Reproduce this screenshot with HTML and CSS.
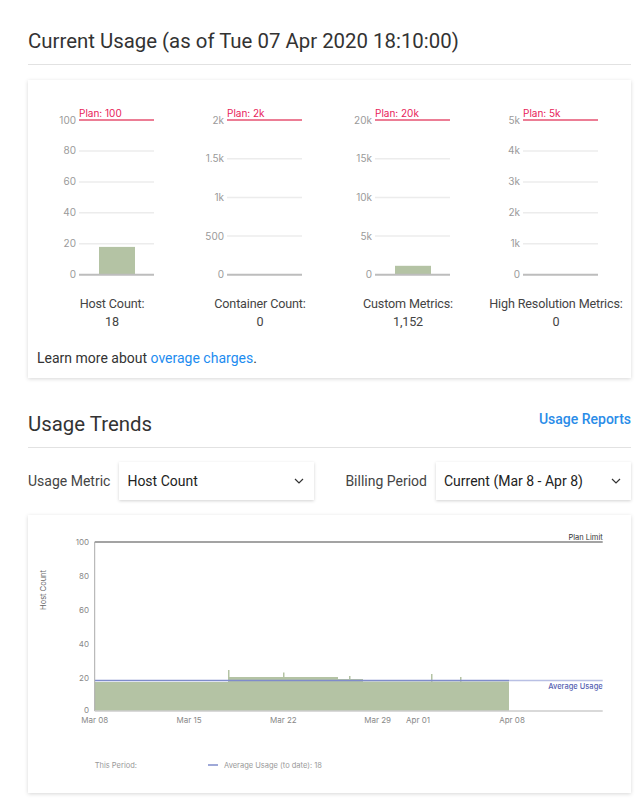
FILE: index.html
```html
<!DOCTYPE html>
<html lang="en">
<head>
<meta charset="utf-8">
<title>Usage</title>
<link rel="stylesheet" href="styles.css">
</head>
<body>
<main class="page">
  <h1 class="section-title">Current Usage (as of Tue 07 Apr 2020 18:10:00)</h1>

  <section class="card usage-card">
    <div class="usage-grid">
      <div class="usage-col">
        <svg class="mini" width="148" height="185" viewBox="0 0 148 185">
          <line class="grid" x1="41" x2="116" y1="50.9" y2="50.9"/>
          <line class="grid" x1="41" x2="116" y1="81.9" y2="81.9"/>
          <line class="grid" x1="41" x2="116" y1="112.8" y2="112.8"/>
          <line class="grid" x1="41" x2="116" y1="143.8" y2="143.8"/>
          <rect class="bar" x="61" y="146.9" width="36" height="27.8"/>
          <line class="zero" x1="41" x2="116" y1="174.7" y2="174.7"/>
          <line class="plan" x1="41" x2="116" y1="20" y2="20"/>
          <text class="plan-label" x="41" y="16.5">Plan: 100</text>
          <text class="tick" x="38" y="23.5">100</text>
          <text class="tick" x="38" y="54.4">80</text>
          <text class="tick" x="38" y="85.4">60</text>
          <text class="tick" x="38" y="116.3">40</text>
          <text class="tick" x="38" y="147.3">20</text>
          <text class="tick" x="38" y="178.2">0</text>
        </svg>
        <div class="usage-name">Host Count:</div>
        <div class="usage-value">18</div>
      </div>

      <div class="usage-col">
        <svg class="mini" width="148" height="185" viewBox="0 0 148 185">
          <line class="grid" x1="41" x2="116" y1="58.7" y2="58.7"/>
          <line class="grid" x1="41" x2="116" y1="97.4" y2="97.4"/>
          <line class="grid" x1="41" x2="116" y1="136" y2="136"/>
          <line class="zero" x1="41" x2="116" y1="174.7" y2="174.7"/>
          <line class="plan" x1="41" x2="116" y1="20" y2="20"/>
          <text class="plan-label" x="41" y="16.5">Plan: 2k</text>
          <text class="tick" x="38" y="23.5">2k</text>
          <text class="tick" x="38" y="62.2">1.5k</text>
          <text class="tick" x="38" y="100.9">1k</text>
          <text class="tick" x="38" y="139.5">500</text>
          <text class="tick" x="38" y="178.2">0</text>
        </svg>
        <div class="usage-name">Container Count:</div>
        <div class="usage-value">0</div>
      </div>

      <div class="usage-col">
        <svg class="mini" width="148" height="185" viewBox="0 0 148 185">
          <line class="grid" x1="41" x2="116" y1="58.7" y2="58.7"/>
          <line class="grid" x1="41" x2="116" y1="97.4" y2="97.4"/>
          <line class="grid" x1="41" x2="116" y1="136" y2="136"/>
          <rect class="bar" x="61" y="165.8" width="36" height="8.9"/>
          <line class="zero" x1="41" x2="116" y1="174.7" y2="174.7"/>
          <line class="plan" x1="41" x2="116" y1="20" y2="20"/>
          <text class="plan-label" x="41" y="16.5">Plan: 20k</text>
          <text class="tick" x="38" y="23.5">20k</text>
          <text class="tick" x="38" y="62.2">15k</text>
          <text class="tick" x="38" y="100.9">10k</text>
          <text class="tick" x="38" y="139.5">5k</text>
          <text class="tick" x="38" y="178.2">0</text>
        </svg>
        <div class="usage-name">Custom Metrics:</div>
        <div class="usage-value">1,152</div>
      </div>

      <div class="usage-col">
        <svg class="mini" width="148" height="185" viewBox="0 0 148 185">
          <line class="grid" x1="41" x2="116" y1="50.9" y2="50.9"/>
          <line class="grid" x1="41" x2="116" y1="81.9" y2="81.9"/>
          <line class="grid" x1="41" x2="116" y1="112.8" y2="112.8"/>
          <line class="grid" x1="41" x2="116" y1="143.8" y2="143.8"/>
          <line class="zero" x1="41" x2="116" y1="174.7" y2="174.7"/>
          <line class="plan" x1="41" x2="116" y1="20" y2="20"/>
          <text class="plan-label" x="41" y="16.5">Plan: 5k</text>
          <text class="tick" x="38" y="23.5">5k</text>
          <text class="tick" x="38" y="54.4">4k</text>
          <text class="tick" x="38" y="85.4">3k</text>
          <text class="tick" x="38" y="116.3">2k</text>
          <text class="tick" x="38" y="147.3">1k</text>
          <text class="tick" x="38" y="178.2">0</text>
        </svg>
        <div class="usage-name">High Resolution Metrics:</div>
        <div class="usage-value">0</div>
      </div>
    </div>
    <p class="learn">Learn more about <a class="link" href="#">overage charges</a>.</p>
  </section>

  <div class="trends-head">
    <h2 class="section-title plain">Usage Trends</h2>
    <a class="reports-link" href="#">Usage Reports</a>
  </div>

  <div class="controls">
    <div class="control">
      <span class="control-label">Usage Metric</span>
      <div class="select">
        <span>Host Count</span>
        <svg class="chevron" width="10" height="6" viewBox="0 0 10 6"><path d="M1 1 L5 5 L9 1"/></svg>
      </div>
    </div>
    <div class="control">
      <span class="control-label">Billing Period</span>
      <div class="select">
        <span>Current (Mar 8 - Apr 8)</span>
        <svg class="chevron" width="10" height="6" viewBox="0 0 10 6"><path d="M1 1 L5 5 L9 1"/></svg>
      </div>
    </div>
  </div>

  <section class="card chart-card">
    <svg class="trend" width="603" height="278" viewBox="0 0 603 278">
      <path class="area" d="M66.7 196 V167 H200 V155 H201.5 V162 H255 V157.5 H256.5 V162 H310 V164 H321 V161 H322.5 V164 H335 V166.5 H403 V159 H404.5 V166.5 H432 V162 H433.5 V166.5 H481 V196 Z"/>
      <line class="avg" x1="66.7" x2="481" y1="165.6" y2="165.6"/>
      <line class="avg-future" x1="481" x2="574.7" y1="165.6" y2="165.6"/>
      <line class="yaxis" x1="66.7" x2="66.7" y1="27" y2="196"/>
      <line class="xaxis" x1="66.7" x2="574.7" y1="196" y2="196"/>
      <line class="limit" x1="66.7" x2="574.7" y1="27" y2="27"/>
      <text class="limit-label" x="574.7" y="25">Plan Limit</text>
      <text class="avg-label" x="574.7" y="174">Average Usage</text>
      <text class="ytick" x="61" y="30">100</text>
      <text class="ytick" x="61" y="64">80</text>
      <text class="ytick" x="61" y="98">60</text>
      <text class="ytick" x="61" y="131.5">40</text>
      <text class="ytick" x="61" y="165.5">20</text>
      <text class="ytick" x="61" y="198.3">0</text>
      <text class="ytitle" transform="translate(18 75) rotate(-90)">Host Count</text>
      <text class="xtick" x="66.7" y="207.5">Mar 08</text>
      <text class="xtick" x="161" y="207.5">Mar 15</text>
      <text class="xtick" x="255.3" y="207.5">Mar 22</text>
      <text class="xtick" x="349.6" y="207.5">Mar 29</text>
      <text class="xtick" x="390" y="207.5">Apr 01</text>
      <text class="xtick" x="484" y="207.5">Apr 08</text>
      <text class="legend" x="66.7" y="253">This Period:</text>
      <line class="legend-dash" x1="180" x2="190" y1="250" y2="250"/>
      <text class="legend" x="196" y="253">Average Usage (to date): 18</text>
    </svg>
  </section>
</main>
</body>
</html>
```

FILE: styles.css
```css
* { box-sizing: border-box; }

html, body {
  margin: 0;
  padding: 0;
  background: #fff;
}

body {
  font-family: Roboto, "Liberation Sans", sans-serif;
  color: #333;
}

.page {
  width: 603px;
  margin-left: 28px;
  padding-top: 29px;
  padding-bottom: 10px;
}

.section-title {
  margin: 0;
  font-size: 20.4px;
  line-height: 24px;
  font-weight: 400;
  color: #333;
  padding-bottom: 11px;
  border-bottom: 1px solid #e2e2e2;
}

.section-title.plain {
  border-bottom: none;
}

.card {
  background: #fff;
  box-shadow: 0 1px 4px rgba(0, 0, 0, 0.16);
}

.usage-card {
  margin-top: 15px;
  padding: 20px 0 11px 10px;
}

.usage-grid {
  display: grid;
  grid-template-columns: repeat(4, 148px);
}

.usage-col {
  display: flex;
  flex-direction: column;
  align-items: center;
}

.mini {
  display: block;
  align-self: flex-start;
  margin-bottom: 10px;
  overflow: visible;
}

.mini .grid { stroke: #ececec; stroke-width: 1.5; }
.mini .zero { stroke: #bdbdbd; stroke-width: 2; }
.mini .plan { stroke: #ec7d95; stroke-width: 2; }
.mini .bar { fill: #b4c3a4; }
.mini .plan-label {
  fill: #e8225a;
  font-family: Inter, "Liberation Sans", sans-serif;
  font-size: 10px;
}
.mini .tick {
  fill: #9a9a9a;
  font-family: Inter, "Liberation Sans", sans-serif;
  font-size: 10px;
  text-anchor: end;
}

.usage-name,
.usage-value {
  font-size: 12.6px;
  letter-spacing: -0.15px;
  line-height: 18px;
  color: #444;
  white-space: nowrap;
}

.learn {
  margin: 18px 0 0 -1px;
  font-size: 14px;
  line-height: 18px;
  color: #333;
}

.link {
  color: #1d8cf0;
  text-decoration: none;
}

.trends-head {
  margin-top: 34px;
  display: flex;
  justify-content: space-between;
  align-items: flex-start;
  border-bottom: 1px solid #e2e2e2;
}

.reports-link {
  margin-top: -2px;
  font-size: 14px;
  line-height: 18px;
  font-weight: 500;
  color: #2a8ce8;
  text-decoration: none;
}

.controls {
  margin-top: 14px;
  display: flex;
  justify-content: space-between;
}

.control {
  display: flex;
  align-items: center;
  gap: 9px;
}

.control-label {
  font-size: 14px;
  color: #444;
}

.select {
  width: 195px;
  height: 38px;
  display: flex;
  align-items: center;
  justify-content: space-between;
  padding: 0 10px 0 8px;
  background: #fff;
  box-shadow: 0 1px 3px rgba(0, 0, 0, 0.18);
  font-size: 14px;
  color: #222;
}

.chevron path {
  fill: none;
  stroke: #333;
  stroke-width: 1.2;
}

.chart-card {
  margin-top: 15px;
  height: 278px;
}

.trend {
  display: block;
  font-family: Inter, "Liberation Sans", sans-serif;
}

.trend .area { fill: #b4c3a4; }
.trend .avg { stroke: #7f8ccb; stroke-width: 1.5; }
.trend .avg-future { stroke: #b9c0e4; stroke-width: 1.5; }
.trend .yaxis { stroke: #aaa; stroke-width: 1; }
.trend .xaxis { stroke: #ccc; stroke-width: 1.5; }
.trend .limit { stroke: #a3a3a3; stroke-width: 2; }
.trend .limit-label { fill: #333; font-size: 7.5px; text-anchor: end; }
.trend .avg-label { fill: #5561b2; font-size: 7.5px; font-weight: 500; text-anchor: end; }
.trend .ytick { fill: #888; font-size: 8px; text-anchor: end; }
.trend .ytitle { fill: #666; font-size: 7.5px; text-anchor: middle; }
.trend .xtick { fill: #888; font-size: 8px; text-anchor: middle; }
.trend .legend { fill: #999; font-size: 7.5px; }
.trend .legend-dash { stroke: #7f8ccb; stroke-width: 1.5; }
```
